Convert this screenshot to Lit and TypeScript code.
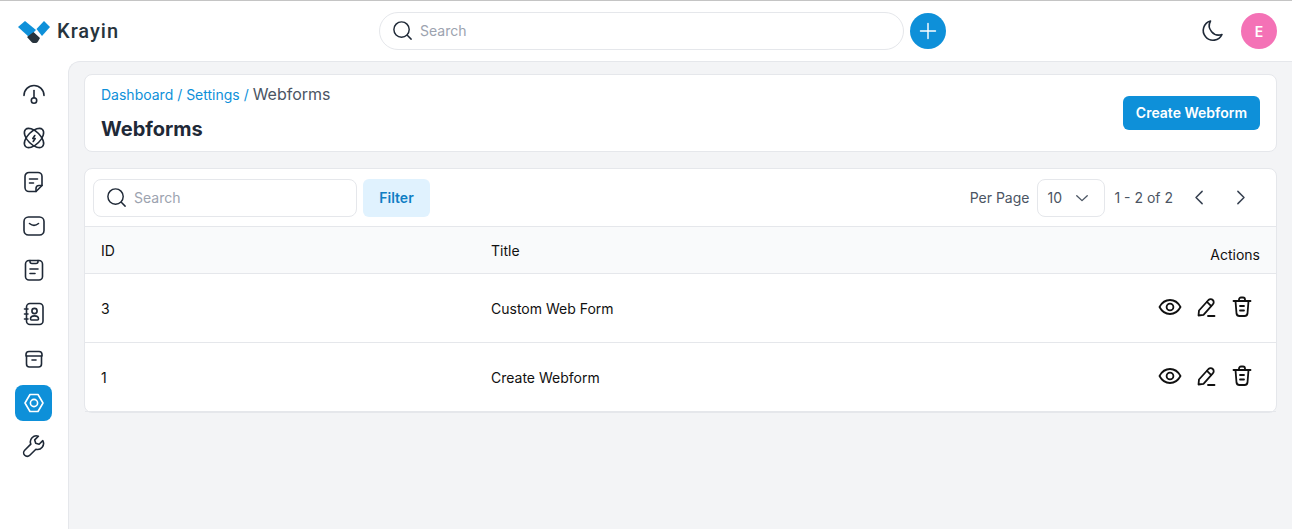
import { LitElement, html, css, svg } from "lit";
import { customElement } from "lit/decorators.js";

const ico = (body: unknown, size = 24, color = "#1f2937", sw = 1.6) => html`<svg
  width=${size} height=${size} viewBox="0 0 24 24" fill="none" stroke=${color}
  stroke-width=${sw} stroke-linecap="round" stroke-linejoin="round">${body}</svg>`;

const search = svg`<circle cx="11" cy="11" r="8"/><path d="M17 17l4 4"/>`;

const navIcons = [
  svg`<path d="M2 13.500a10 10 0 0 1 20 0"/><path d="M12 8.500v7.500"/><circle cx="12" cy="18.500" r="2.700"/>`,
  svg`<ellipse cx="12" cy="12" rx="12" ry="6.400" transform="rotate(45 12 12)"/><ellipse cx="12" cy="12" rx="12" ry="6.400" transform="rotate(-45 12 12)"/><path d="M12.800 9.500l-2 3h2.400l-2 3"/>`,
  svg`<path d="M14 21.500H7a4 4 0 0 1-4-4V6.500a4 4 0 0 1 4-4h9a4 4 0 0 1 4 4v9z"/><path d="M20 15.500h-3a3 3 0 0 0-3 3v3"/><path d="M7.500 9h8M7.500 13h4"/>`,
  svg`<rect x="2" y="3" width="20" height="18" rx="4.500"/><path d="M7.500 9.500c2.800 2.400 6.200 2.400 9 0"/>`,
  svg`<rect x="3.500" y="2.500" width="17" height="19.500" rx="3.500"/><path d="M8 2.500v1a2 2 0 0 0 2 2h4a2 2 0 0 0 2-2v-1"/><path d="M8 11h8M8 15.500h5"/>`,
  svg`<rect x="4.500" y="1.500" width="16.500" height="21" rx="3.500"/><circle cx="12.500" cy="9" r="2.600"/><path d="M8.500 17c0-4.200 8-4.200 8 0 0 .6-.5 1-1 1h-6c-.5 0-1-.4-1-1z"/><path d="M2.500 7h3.500M2.500 12h3.500M2.500 17h3.500"/>`,
  svg`<path d="M4.500 10v8a3 3 0 0 0 3 3h9a3 3 0 0 0 3-3v-8"/><path d="M4 10V8.500a3 3 0 0 1 3-3h10a3 3 0 0 1 3 3V10z"/><path d="M10 14h4"/>`,
  svg`<path d="M8 3.500h8l5 8.500-5 8.500H8L3 12z"/><circle cx="12" cy="12" r="3.600"/>`,
  svg`<path d="M20.800 6.600l-3.700 3.700-3.400-1-1-3.400 3.700-3.700a6 6 0 0 0-7.600 7.900L2.700 16.200a3.500 3.500 0 0 0 5.100 5.100l6.100-6.100a6 6 0 0 0 6.900-8.600z"/>`,
];

const eye = svg`<path d="M1.500 12C4 7.300 7.700 5 12 5s8 2.300 10.500 7c-2.500 4.700-6.200 7-10.500 7S4 16.700 1.500 12z"/><circle cx="12" cy="12" r="3.400"/>`;
const pencil = svg`<path d="M4.500 20.500l.5-5L14.500 5a3 3 0 0 1 4.300 0 3 3 0 0 1 0 4.300L9.500 19.800z"/><path d="M13 6.800l4 4"/><path d="M14 21h6.500"/>`;
const trash = svg`<path d="M3.500 6h17"/><path d="M9 6V4.500a2 2 0 0 1 2-2h2a2 2 0 0 1 2 2V6"/><path d="M5.500 6l1 12.500a3 3 0 0 0 3 2.500h5a3 3 0 0 0 3-2.500l1-12.500"/><path d="M10 11h4M10 15.500h4"/>`;

const rows = [
  { id: "3", title: "Custom Web Form" },
  { id: "1", title: "Create Webform" },
];

@customElement("app-root")
export class AppRoot extends LitElement {
  static styles = css`
    :host {
      display: flex;
      flex-direction: column;
      height: 529px;
      overflow: hidden;
      background: #fff;
      font-family: Inter, "Noto Sans", sans-serif;
      font-size: 14px;
      color: #111827;
    }
    .topline { height: 1px; background: #c4c4c4; flex: none; }

    header {
      flex: none;
      height: 60px;
      display: grid;
      grid-template-columns: 379px 525px 1fr;
      align-items: center;
      box-sizing: border-box;
      padding-right: 15px;
    }
    .logo { display: flex; align-items: center; gap: 6px; padding-left: 17px; }
    .logo span {
      font-family: Roboto, sans-serif;
      font-size: 20px;
      font-weight: 500;
      letter-spacing: 1px;
      color: #27343d;
    }
    .top-search {
      height: 38px;
      box-sizing: border-box;
      border: 1px solid #e5e7eb;
      border-radius: 19px;
      display: flex;
      align-items: center;
      gap: 6px;
      padding: 0 0 2px 11px;
      color: #9ca3af;
    }
    .top-right { display: flex; align-items: center; }
    .plus {
      width: 36px;
      height: 36px;
      border-radius: 50%;
      background: #0e90d9;
      margin-left: 6px;
      display: flex;
      align-items: center;
      justify-content: center;
    }
    .moon { margin-left: auto; display: flex; margin-right: 16px; padding-bottom: 2px; }
    .avatar {
      width: 36px;
      height: 36px;
      border-radius: 50%;
      background: #f472b6;
      color: #fff;
      font-weight: 600;
      display: flex;
      align-items: center;
      justify-content: center;
    }

    .body { flex: 1; display: flex; min-height: 0; }
    nav {
      flex: none;
      width: 68px;
      box-sizing: border-box;
      padding: 15px 0 0 15px;
      display: flex;
      flex-direction: column;
      gap: 8px;
    }
    .nav-item {
      width: 37px;
      height: 36px;
      border-radius: 8px;
      display: flex;
      align-items: center;
      justify-content: center;
    }
    .nav-item.active { background: #0e90d9; margin: 1px 0 -1px; }

    main {
      flex: 1;
      background: #f3f4f6;
      border-top: 1px solid #e5e7eb;
      border-left: 1px solid #e5e7eb;
      border-top-left-radius: 12px;
      padding: 12px 15px 0 15px;
      display: flex;
      flex-direction: column;
      gap: 16px;
      min-width: 0;
    }
    .card {
      background: #fff;
      border: 1px solid #e5e7eb;
      border-radius: 8px;
    }
    .head {
      height: 78px;
      box-sizing: border-box;
      display: flex;
      justify-content: space-between;
      align-items: center;
      padding: 0 16px;
    }
    .crumbs { font-size: 14px; line-height: 22px; color: #0e90d9; }
    .crumbs b { font-weight: 400; font-size: 16px; color: #4b5563; }
    h1 {
      margin: 9px 0 0;
      font-size: 20px;
      line-height: 28px;
      font-weight: 700;
      color: #1f2937;
    }
    .create {
      height: 34px;
      box-sizing: border-box;
      padding: 0 13px 2px;
      display: flex;
      align-items: center;
      border-radius: 6px;
      background: #0e90d9;
      color: #fff;
      font-weight: 600;
    }

    .toolbar {
      height: 58px;
      box-sizing: border-box;
      display: flex;
      align-items: center;
      padding: 0 8px;
      border-bottom: 1px solid #e5e7eb;
    }
    .tb-search {
      width: 264px;
      height: 38px;
      box-sizing: border-box;
      border: 1px solid #e5e7eb;
      border-radius: 8px;
      display: flex;
      align-items: center;
      gap: 6px;
      padding-left: 11px;
      color: #9ca3af;
    }
    .filter {
      margin-left: 6px;
      width: 67px;
      height: 38px;
      border-radius: 6px;
      background: #e0f2fe;
      color: #0e7ec4;
      font-weight: 600;
      display: flex;
      align-items: center;
      justify-content: center;
    }
    .pager { margin-left: auto; display: flex; align-items: center; color: #4b5563; }
    .select {
      width: 68px;
      height: 38px;
      box-sizing: border-box;
      border: 1px solid #e5e7eb;
      border-radius: 8px;
      margin: 0 9px 0 8px;
      padding: 0 13px 0 9px;
      display: flex;
      align-items: center;
      justify-content: space-between;
    }
    .arrows { display: flex; gap: 20px; margin: 0 17px 0 16px; }
    .arrows svg { display: block; }

    .thead, .row {
      display: grid;
      grid-template-columns: 390px 1fr auto;
      padding: 0 16px;
      border-bottom: 1px solid #e5e7eb;
    }
    .thead {
      height: 47px;
      box-sizing: border-box;
      align-items: center;
      background: #f9fafb;
      color: #111;
    }
    .thead .act { align-self: end; padding-bottom: 10px; }
    .row { height: 68px; align-items: center; color: #111; }
    .actions { display: flex; gap: 12px; margin-right: 6px; padding-bottom: 3px; }
  `;

  render() {
    return html`
      <div class="topline"></div>
      <header>
        <div class="logo">
          <svg width="34" height="26" viewBox="17 18 34 26">
            <path d="M18 27L25 21 36 30 29 37z" fill="#0e90d9"/>
            <path d="M36.500 29L44 21 50 27 42 36z" fill="#0e90d9"/>
            <path d="M27 37L33.500 32 40 38l-2 3.500a3 3 0 0 1-3 1.500h-1.500a3 3 0 0 1-2-1z" fill="#27343d"/>
          </svg>
          <span>Krayin</span>
        </div>
        <div class="top-search">${ico(search, 23, "#1f2937", 1.5)}<span>Search</span></div>
        <div class="top-right">
          <div class="plus">
            ${ico(svg`<path d="M12 3v18M3 12h18"/>`, 20, "#fff", 1.7)}
          </div>
          <div class="moon">
            ${ico(svg`<path d="M9.500 3a9.500 9.500 0 0 0 11.500 13.500A9.800 9.800 0 1 1 9.500 3z"/>`, 24, "#1f2937", 1.6)}
          </div>
          <div class="avatar">E</div>
        </div>
      </header>
      <div class="body">
        <nav>
          ${navIcons.map(
            (n, i) => html`<div class="nav-item ${i === 7 ? "active" : ""}">
              ${ico(n, 24, i === 7 ? "#fff" : "#1f2937", 1.6)}
            </div>`
          )}
        </nav>
        <main>
          <div class="card head">
            <div>
              <div class="crumbs">Dashboard / Settings / <b>Webforms</b></div>
              <h1>Webforms</h1>
            </div>
            <div class="create">Create Webform</div>
          </div>
          <div class="card">
            <div class="toolbar">
              <div class="tb-search">${ico(search, 23, "#1f2937", 1.5)}<span>Search</span></div>
              <div class="filter">Filter</div>
              <div class="pager">
                <span>Per Page</span>
                <div class="select">
                  <span>10</span>
                  ${ico(svg`<path d="M5 9l7 6.500L19 9"/>`, 18, "#4b5563", 1.8)}
                </div>
                <span>1 - 2 of 2</span>
                <div class="arrows">
                  ${ico(svg`<path d="M15 5l-7 7 7 7"/>`, 21, "#374151", 1.7)}
                  ${ico(svg`<path d="M9 5l7 7-7 7"/>`, 21, "#374151", 1.7)}
                </div>
              </div>
            </div>
            <div class="thead">
              <span>ID</span><span>Title</span><span class="act">Actions</span>
            </div>
            ${rows.map(
              (r) => html`<div class="row">
                <span>${r.id}</span><span>${r.title}</span>
                <div class="actions">
                  ${ico(eye, 24, "#111", 1.8)}${ico(pencil, 24, "#111", 1.8)}${ico(trash, 24, "#111", 1.8)}
                </div>
              </div>`
            )}
          </div>
        </main>
      </div>
    `;
  }
}
